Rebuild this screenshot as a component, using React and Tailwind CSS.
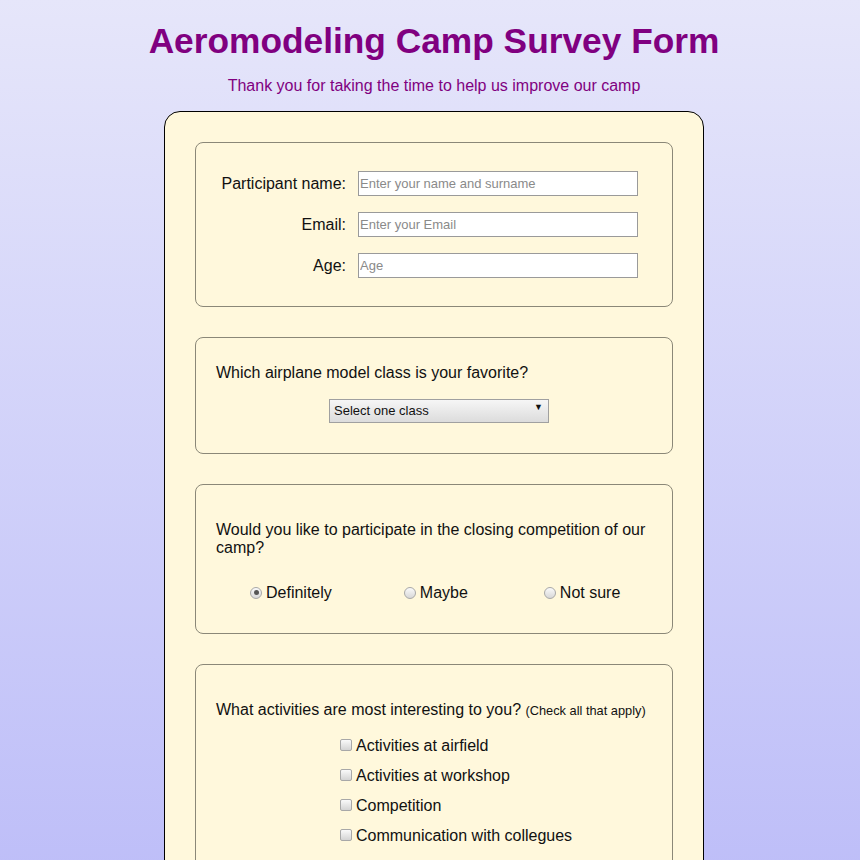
import React from "react";

const Radio = ({ checked, label }) => (
  <label className="flex items-center">
    <span className="w-3 h-3 rounded-full border border-[#a8a8a8] bg-gradient-to-b from-[#fafafa] to-[#d8d8d8] flex items-center justify-center -mt-[1px]">
      {checked && <span className="w-[5px] h-[5px] rounded-full bg-[#555]" />}
    </span>
    <span className="ml-1 text-[16px]">{label}</span>
  </label>
);

const Check = ({ label }) => (
  <label className="flex items-center h-[30px]">
    <span className="w-3 h-3 rounded-[2px] border border-[#a8a8a8] bg-gradient-to-b from-[#fafafa] to-[#d4d4d4] -mt-[2px]" />
    <span className="ml-1 text-[16px]">{label}</span>
  </label>
);

export default function App() {
  const fields = [
    { label: "Participant name:", ph: "Enter your name and surname" },
    { label: "Email:", ph: "Enter your Email" },
    { label: "Age:", ph: "Age" },
  ];

  return (
    <div
      className="min-h-[860px] pl-2 bg-gradient-to-b from-[#e6e6fa] to-[#bcbcf8] text-[#111]"
      style={{ fontFamily: '"Liberation Sans", Arial, sans-serif' }}
    >
      {/* ===== HEADER ===== */}
      <h1 className="pt-[21px] text-center text-[35.3px] leading-[40px] font-bold text-[#800080]">
        Aeromodeling Camp Survey Form
      </h1>
      <p className="mt-[16px] text-center text-[16px] leading-[18px] text-[#800080]">
        Thank you for taking the time to help us improve our camp
      </p>

      {/* ===== CARD ===== */}
      <div className="mt-[16px] mx-auto w-[540px] bg-[#fff8dc] border border-black rounded-2xl px-[30px] pt-[30px] pb-10 flex flex-col gap-[30px]">

        {/* personal info */}
        <div className="border border-[#8b8878] rounded-lg pt-[28px] pb-[28px] flex flex-col gap-4">
          {fields.map((f) => (
            <div key={f.label} className="flex items-center">
              <span className="w-[150px] text-right text-[16px]">{f.label}</span>
              <input
                placeholder={f.ph}
                className="ml-3 w-[280px] h-[25px] bg-white border border-[#9a9a9a] px-[1px] text-[13px] placeholder:text-[#8a8a8a] outline-none"
              />
            </div>
          ))}
        </div>

        {/* favourite class */}
        <div className="border border-[#8b8878] rounded-lg px-5 pt-[26px] pb-[30px]">
          <p className="text-[16px] leading-[18px]">Which airplane model class is your favorite?</p>
          <div className="mt-[17px] ml-[113px] w-[220px] h-6 border border-[#a0a0a0] bg-gradient-to-b from-[#f6f6f6] to-[#dcdcdc] flex items-center justify-between pl-1 pr-[5px] text-[13px]">
            <span>Select one class</span>
            <span className="text-[9px] -mt-[6px]">▼</span>
          </div>
        </div>

        {/* competition */}
        <div className="border border-[#8b8878] rounded-lg px-5 pt-[36px] pb-[28px]">
          <p className="text-[16px] leading-[18px]">
            Would you like to participate in the closing competition of our camp?
          </p>
          <div className="mt-[24px] flex">
            <div className="ml-[34px]"><Radio checked label="Definitely" /></div>
            <div className="ml-[72px]"><Radio label="Maybe" /></div>
            <div className="ml-[76px]"><Radio label="Not sure" /></div>
          </div>
        </div>

        {/* activities */}
        <div className="border border-[#8b8878] rounded-lg px-5 pt-[36px] pb-6">
          <p className="text-[16px] leading-[18px]">
            What activities are most interesting to you?{" "}
            <span className="text-[12.8px]">(Check all that apply)</span>
          </p>
          <div className="mt-[11px] ml-[124px] flex flex-col">
            <Check label="Activities at airfield" />
            <Check label="Activities at workshop" />
            <Check label="Competition" />
            <Check label="Communication with collegues" />
          </div>
        </div>
      </div>
    </div>
  );
}
